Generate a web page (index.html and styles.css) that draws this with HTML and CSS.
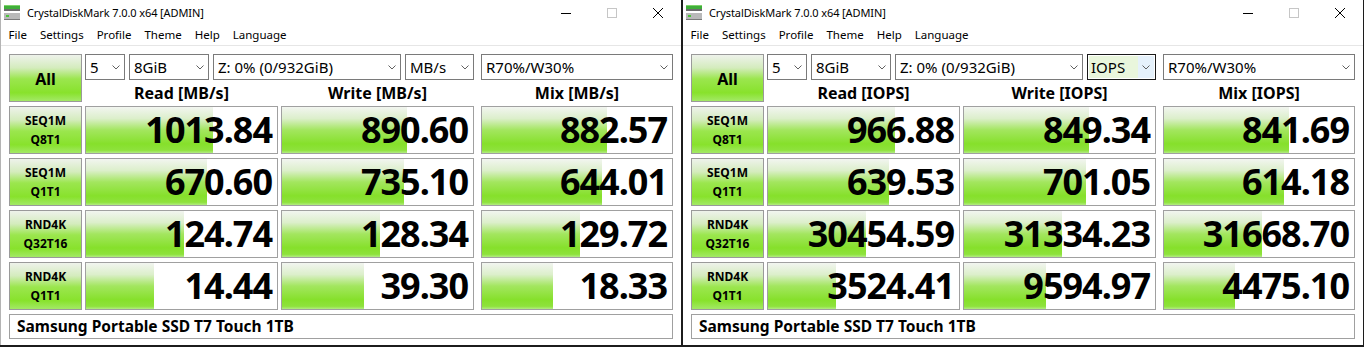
FILE: index.html
```html
<!doctype html>
<html>
  <head>
    <meta charset="utf-8">
    <title>CrystalDiskMark 7.0.0 x64 [ADMIN]</title>
    <link rel="stylesheet" href="styles.css">
  </head>
  <body>
    <div class="screen">

      <!-- MB/s window -->
      <section class="window first">
        <header class="titlebar">
          <svg class="app-icon" viewBox="0 0 16 16">
            <rect x="0" y="0" width="16" height="4" fill="#3fae3a"></rect>
            <rect x="0" y="0" width="16" height="1" fill="#7fd36b"></rect>
            <rect x="0" y="4" width="16" height="2" fill="#6b6b6b"></rect>
            <rect x="0" y="8" width="16" height="7" fill="#b9b9b9"></rect>
            <rect x="0" y="14" width="16" height="1" fill="#7a7a7a"></rect>
            <rect x="2" y="10" width="3" height="2" fill="#4cc43a"></rect>
          </svg>
          <span class="title">CrystalDiskMark 7.0.0 x64 [ADMIN]</span>
          <div class="caption">
            <span class="cap-btn"><svg viewBox="0 0 10 10"><path d="M0 5.5 H10"></path></svg></span>
            <span class="cap-btn disabled"><svg viewBox="0 0 10 10"><rect x="0.5" y="0.5" width="9" height="9"></rect></svg></span>
            <span class="cap-btn"><svg viewBox="0 0 10 10"><path d="M0 0 L10 10 M10 0 L0 10"></path></svg></span>
          </div>
        </header>
        <nav class="menubar">
          <span>File</span><span>Settings</span><span>Profile</span><span>Theme</span><span>Help</span><span>Language</span>
        </nav>
        <main class="client">
          <div class="board">
            <div class="all">All</div>
            <div class="options">
              <div class="combo w-count"><span>5</span><svg viewBox="0 0 8 5"><path d="M0.5 0.5 L4 4 L7.5 0.5"></path></svg></div>
              <div class="combo w-size"><span>8GiB</span><svg viewBox="0 0 8 5"><path d="M0.5 0.5 L4 4 L7.5 0.5"></path></svg></div>
              <div class="combo w-drive"><span>Z: 0% (0/932GiB)</span><svg viewBox="0 0 8 5"><path d="M0.5 0.5 L4 4 L7.5 0.5"></path></svg></div>
              <div class="combo w-unit"><span>MB/s</span><svg viewBox="0 0 8 5"><path d="M0.5 0.5 L4 4 L7.5 0.5"></path></svg></div>
            </div>
            <div class="combo w-mix mix"><span>R70%/W30%</span><svg viewBox="0 0 8 5"><path d="M0.5 0.5 L4 4 L7.5 0.5"></path></svg></div>

            <div class="head read-h">Read [MB/s]</div>
            <div class="head write-h">Write [MB/s]</div>
            <div class="head mix mix-h">Mix [MB/s]</div>

            <div class="test">SEQ1M<br>Q8T1</div>
            <div class="cell"><i class="bar" style="width:127px"></i><b>1013.84</b></div>
            <div class="cell"><i class="bar" style="width:125px"></i><b>890.60</b></div>
            <div class="cell mix"><i class="bar" style="width:125px"></i><b>882.57</b></div>

            <div class="test">SEQ1M<br>Q1T1</div>
            <div class="cell"><i class="bar" style="width:121px"></i><b>670.60</b></div>
            <div class="cell"><i class="bar" style="width:122px"></i><b>735.10</b></div>
            <div class="cell mix"><i class="bar" style="width:120px"></i><b>644.01</b></div>

            <div class="test">RND4K<br>Q32T16</div>
            <div class="cell"><i class="bar" style="width:98px"></i><b>124.74</b></div>
            <div class="cell"><i class="bar" style="width:98px"></i><b>128.34</b></div>
            <div class="cell mix"><i class="bar" style="width:98px"></i><b>129.72</b></div>

            <div class="test">RND4K<br>Q1T1</div>
            <div class="cell"><i class="bar" style="width:68px"></i><b>14.44</b></div>
            <div class="cell"><i class="bar" style="width:82px"></i><b>39.30</b></div>
            <div class="cell mix"><i class="bar" style="width:71px"></i><b>18.33</b></div>

            <div class="device">Samsung Portable SSD T7 Touch 1TB</div>
          </div>
        </main>
      </section>

      <!-- IOPS window -->
      <section class="window">
        <header class="titlebar">
          <svg class="app-icon" viewBox="0 0 16 16">
            <rect x="0" y="0" width="16" height="4" fill="#3fae3a"></rect>
            <rect x="0" y="0" width="16" height="1" fill="#7fd36b"></rect>
            <rect x="0" y="4" width="16" height="2" fill="#6b6b6b"></rect>
            <rect x="0" y="8" width="16" height="7" fill="#b9b9b9"></rect>
            <rect x="0" y="14" width="16" height="1" fill="#7a7a7a"></rect>
            <rect x="2" y="10" width="3" height="2" fill="#4cc43a"></rect>
          </svg>
          <span class="title">CrystalDiskMark 7.0.0 x64 [ADMIN]</span>
          <div class="caption">
            <span class="cap-btn"><svg viewBox="0 0 10 10"><path d="M0 5.5 H10"></path></svg></span>
            <span class="cap-btn disabled"><svg viewBox="0 0 10 10"><rect x="0.5" y="0.5" width="9" height="9"></rect></svg></span>
            <span class="cap-btn"><svg viewBox="0 0 10 10"><path d="M0 0 L10 10 M10 0 L0 10"></path></svg></span>
          </div>
        </header>
        <nav class="menubar">
          <span>File</span><span>Settings</span><span>Profile</span><span>Theme</span><span>Help</span><span>Language</span>
        </nav>
        <main class="client">
          <div class="board">
            <div class="all">All</div>
            <div class="options">
              <div class="combo w-count"><span>5</span><svg viewBox="0 0 8 5"><path d="M0.5 0.5 L4 4 L7.5 0.5"></path></svg></div>
              <div class="combo w-size"><span>8GiB</span><svg viewBox="0 0 8 5"><path d="M0.5 0.5 L4 4 L7.5 0.5"></path></svg></div>
              <div class="combo w-drive"><span>Z: 0% (0/932GiB)</span><svg viewBox="0 0 8 5"><path d="M0.5 0.5 L4 4 L7.5 0.5"></path></svg></div>
              <div class="combo w-unit focused"><span>IOPS</span><svg viewBox="0 0 8 5"><path d="M0.5 0.5 L4 4 L7.5 0.5"></path></svg></div>
            </div>
            <div class="combo w-mix mix"><span>R70%/W30%</span><svg viewBox="0 0 8 5"><path d="M0.5 0.5 L4 4 L7.5 0.5"></path></svg></div>

            <div class="head read-h">Read [IOPS]</div>
            <div class="head write-h">Write [IOPS]</div>
            <div class="head mix mix-h">Mix [IOPS]</div>

            <div class="test">SEQ1M<br>Q8T1</div>
            <div class="cell"><i class="bar" style="width:127px"></i><b>966.88</b></div>
            <div class="cell"><i class="bar" style="width:125px"></i><b>849.34</b></div>
            <div class="cell mix"><i class="bar" style="width:125px"></i><b>841.69</b></div>

            <div class="test">SEQ1M<br>Q1T1</div>
            <div class="cell"><i class="bar" style="width:121px"></i><b>639.53</b></div>
            <div class="cell"><i class="bar" style="width:122px"></i><b>701.05</b></div>
            <div class="cell mix"><i class="bar" style="width:120px"></i><b>614.18</b></div>

            <div class="test">RND4K<br>Q32T16</div>
            <div class="cell"><i class="bar" style="width:98px"></i><b>30454.59</b></div>
            <div class="cell"><i class="bar" style="width:98px"></i><b>31334.23</b></div>
            <div class="cell mix"><i class="bar" style="width:98px"></i><b>31668.70</b></div>

            <div class="test">RND4K<br>Q1T1</div>
            <div class="cell"><i class="bar" style="width:68px"></i><b>3524.41</b></div>
            <div class="cell"><i class="bar" style="width:82px"></i><b>9594.97</b></div>
            <div class="cell mix"><i class="bar" style="width:71px"></i><b>4475.10</b></div>

            <div class="device">Samsung Portable SSD T7 Touch 1TB</div>
          </div>
        </main>
      </section>

    </div>
  </body>
</html>
```

FILE: styles.css
```css
html {
  box-sizing: border-box;
}

*, *:before, *:after {
  box-sizing: inherit;
}

body {
  background: #1c1c1c;
  color: #000;
  font-family: "Noto Sans", "Open Sans", sans-serif;
  margin: 0;
}

.screen {
  display: flex;
  height: 347px;
  overflow: hidden;
}

.window {
  background: #fff;
  border-left: 1px solid #1c1c1c;
  border-right: 1px solid #1c1c1c;
  display: flex;
  flex-direction: column;
  height: 345px;
  width: 682px;
}

.window.first {
  border-left-color: #b4b4b4;
}

/* title bar */

.titlebar {
  align-items: center;
  display: flex;
  height: 26px;
}

.app-icon {
  height: 16px;
  margin: 0 7px 0 3px;
  width: 16px;
}

.title {
  font-size: 11px;
  letter-spacing: -0.1px;
  flex: 1;
  padding-bottom: 1px;
}

.caption {
  display: flex;
  height: 26px;
}

.cap-btn {
  align-items: center;
  display: flex;
  justify-content: center;
  width: 46px;
}

.cap-btn svg {
  fill: none;
  height: 10px;
  stroke: #000;
  stroke-width: 1;
  width: 10px;
}

.cap-btn.disabled svg {
  stroke: #c6c6c6;
}

/* menu */

.menubar {
  border-bottom: 1px solid #e6e6e6;
  display: flex;
  font-size: 11.5px;
  height: 20px;
  line-height: 18px;
  padding-left: 1px;
}

.menubar span {
  padding: 0 6.5px;
}

/* main grid */

.client {
  flex: 1;
  padding: 8px 0 0 8px;
}

.board {
  display: grid;
  gap: 4px 3px;
  grid-template-columns: 73px 193px 193px 196px;
  grid-template-rows: 26px 18px repeat(4, 48px) 25px;
}

.mix {
  justify-self: end;
  width: 192px;
}

.all,
.test {
  background: linear-gradient(#eef2eb, #d4ecbd 28%, #9be64e 52%, #88e22c 82%, #a3e966);
  border: 1px solid #9a9a9a;
  font-weight: bold;
  text-align: center;
}

.all {
  align-items: center;
  display: flex;
  font-size: 16px;
  grid-row: 1 / 3;
  justify-content: center;
  padding-top: 2px;
}

.test {
  font-size: 12px;
  line-height: 19px;
  padding-top: 4px;
}

.options {
  display: flex;
  gap: 4px;
  grid-column: 2 / 4;
}

.combo {
  align-items: center;
  border: 1px solid #7a7a7a;
  display: flex;
  font-size: 15px;
  height: 26px;
  justify-content: space-between;
  padding: 0 4px 0 4px;
}

.combo span {
  line-height: 22px;
}

.combo svg {
  fill: none;
  height: 5px;
  stroke: #606060;
  stroke-width: 1;
  width: 8px;
}

.w-count { width: 40px; }
.w-size { width: 80px; }
.w-drive { width: 188px; }
.w-unit { width: 69px; }

.combo.focused {
  border-color: #1a1a1a;
  padding: 1px;
}

.combo.focused span {
  background: #e9f6dc;
  flex: 1;
  height: 22px;
  padding-left: 2px;
}

.combo.focused svg {
  background: #e5f1fb;
  box-sizing: content-box;
  height: 5px;
  padding: 9px 4px 8px;
}

.head {
  font-size: 16px;
  font-weight: bold;
  line-height: 18px;
  text-align: center;
}

.read-h {
  grid-column: 2;
}

.cell {
  border: 1px solid #a0a0a0;
  display: flex;
  justify-content: flex-end;
  position: relative;
}

.bar {
  background: linear-gradient(#f2f5f0, #dcefcb 25%, #a3e65f 50%, #86e02b 80%, #8ee23c 94%, #b2ec82);
  bottom: 0;
  left: 0;
  position: absolute;
  top: 0;
}

.cell b {
  font-size: 36px;
  letter-spacing: -1px;
  line-height: 46px;
  padding-right: 5px;
  position: relative;
}

.device {
  border: 1px solid #a0a0a0;
  font-size: 15.5px;
  font-weight: bold;
  grid-column: 1 / 5;
  line-height: 22px;
  padding-left: 7px;
  width: 664px;
}
```
